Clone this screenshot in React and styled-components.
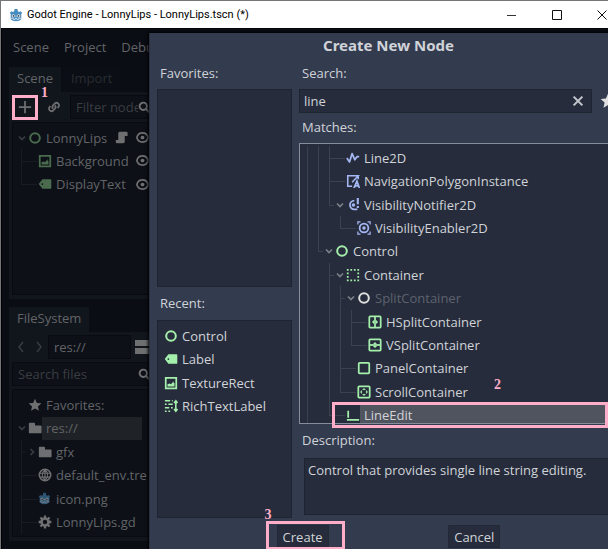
import React from "react";
import styled, { createGlobalStyle, css } from "styled-components";

const c = {
  pink: "#ffaec9",
  dialog: "#333b4f",
  field: "#262c3b",
  fieldEdge: "#1e2430",
  text: "#d0d3d8",
  green: "#a5efac",
  blue: "#a5b7f3",
  dimGreen: "#4a6b4d",
  dimText: "#626467",
  dimIcon: "#6e6f70",
  dock: "#11161d",
  well: "#0d1017",
  wellEdge: "#090b10",
};

const GlobalStyle = createGlobalStyle`
  * { box-sizing: border-box; }
  body { margin: 0; background: #777; font: 13px/20px "Open Sans", "Noto Sans", sans-serif; }
  button, input { font: inherit; color: inherit; border: 0; background: none; padding: 0; margin: 0; }
  ul { list-style: none; margin: 0; padding: 0; }
  h1, h2, p { margin: 0; }
  svg { display: block; flex: none; }
`;

const Desktop = styled.div`
  min-height: 100vh;
  padding: 1px 0 0 1px;
  background: #74767a;
  display: flex;
  flex-direction: column;
  overflow: hidden;
`;

const TitleBar = styled.header`
  height: 27px;
  flex: none;
  display: flex;
  align-items: center;
  gap: 4px;
  padding-left: 8px;
  background: #fff;
  color: #000;
`;

const WindowTitle = styled.h1`
  flex: 1;
  font: 11px/16px Roboto, sans-serif;
`;

const WindowButton = styled.button`
  width: 41px;
  height: 27px;
  display: flex;
  align-items: center;
  justify-content: center;
  &:last-child { margin-right: -14px; }
`;

const Editor = styled.main`
  position: relative;
  flex: 1;
  background: #0a0d14;
  border-left: 1px solid #000;
  border-top: 1px solid #05070b;
  overflow: hidden;
  color: ${c.dimText};
`;

const MenuBar = styled.nav`
  height: 36px;
  margin-bottom: 2px;
  display: flex;
  align-items: center;
  gap: 15px;
  padding-left: 11px;
`;

const Docks = styled.div`
  width: 147px;
  margin-left: 7px;
`;

const Tabs = styled.div`
  display: flex;
  gap: 2px;
  height: 25px;
`;

const Tab = styled.button`
  padding: 0 8px 3px;
  background: ${(p) => (p.$active ? c.dock : "#0b0f15")};
  color: ${(p) => (p.$active ? c.dimText : "#292c31")};
`;

const Dock = styled.section`
  background: ${c.dock};
  padding: 3px 3px 4px;
  height: ${(p) => p.$height}px;
  margin-bottom: 8px;
  display: flex;
  flex-direction: column;
  gap: 3px;
`;

const DockBar = styled.div`
  height: 24px;
  flex: none;
  display: flex;
  align-items: center;
`;

const DockButton = styled.button`
  position: relative;
  width: ${(p) => p.$width}px;
  height: 24px;
  flex: none;
  display: flex;
  align-items: center;
  justify-content: center;
`;

const DockField = styled.label`
  flex: 1;
  min-width: 0;
  height: 24px;
  display: flex;
  align-items: center;
  padding: 0 1px 0 5px;
  background: ${c.well};
  border: 1px solid ${c.wellEdge};
  input { width: 0; flex: 1; outline: 0; }
  input::placeholder { color: #3a3d42; opacity: 1; }
`;

const Well = styled.div`
  flex: 1;
  padding: ${(p) => p.$top}px 10px 0 3px;
  background: ${c.well};
  border: 1px solid ${c.wellEdge};
  overflow: hidden;
`;

/* Trees */
const TreeList = styled.ul`
  height: ${(p) => p.$height}px;
  display: grid;
  grid-auto-rows: 1fr;
`;

const TreeRow = styled.li`
  display: flex;
  align-items: stretch;
  min-width: 0;
`;

const Guide = styled.span`
  --line: ${(p) => (p.$dim ? "#181b21" : "#3b414f")};
  position: relative;
  flex: none;
  width: ${(p) => (p.$short ? 5 : 11)}px;
  ${(p) => "|+L".includes(p.$kind) && css`
    &::before {
      content: "";
      position: absolute;
      left: 0;
      top: 0;
      width: 1px;
      height: ${p.$kind === "L" ? "50%" : "100%"};
      background: var(--line);
    }
  `}
  ${(p) => "+L-".includes(p.$kind) && css`
    &::after {
      content: "";
      position: absolute;
      left: 0;
      right: 0;
      top: 50%;
      height: 1px;
      background: var(--line);
    }
  `}
`;

const Toggle = styled.button`
  width: 11px;
  flex: none;
  display: flex;
  align-items: center;
  justify-content: center;
`;

const IconSlot = styled.span`
  width: 15px;
  flex: none;
  display: flex;
  align-items: center;
  justify-content: center;
`;

const RowLabel = styled.span`
  flex: 1;
  min-width: 0;
  display: flex;
  align-items: center;
  padding-left: 4px;
  white-space: nowrap;
  color: ${(p) => (p.$muted ? "#5d626e" : "inherit")};
  background: ${(p) => p.$fill || "none"};
`;

/* Dialog */
const Dialog = styled.section`
  position: absolute;
  left: 147px;
  right: -20px;
  top: 4px;
  bottom: 0;
  padding: 0 8px 0 7px;
  background: ${c.dialog};
  border-left: 1px solid #2a3040;
  color: ${c.text};
  box-shadow: 0 0 3px 1px #000;
  display: flex;
  flex-direction: column;
`;

const DialogTitle = styled.h2`
  height: 26px;
  font-family: "Noto Sans", sans-serif;
  font-size: 15px;
  line-height: 24px;
  text-align: center;
`;

const Columns = styled.div`
  display: grid;
  grid-template-columns: 135px minmax(0, 1fr);
  gap: 7px;
`;

const Column = styled.div`
  display: flex;
  flex-direction: column;
`;

const Caption = styled.span`
  height: ${(p) => p.$height || 30}px;
  display: flex;
  align-items: center;
  padding: 0 0 2px 3px;
`;

const Box = styled.div`
  height: 198px;
  background: ${c.field};
  border: 1px solid ${c.fieldEdge};
  padding: 3px 5px;
`;

const RecentItem = styled.li`
  display: flex;
  align-items: center;
  gap: 4px;
  padding-left: 1px;
`;

const SearchRow = styled.div`
  display: flex;
  gap: 8px;
  align-items: center;
  margin-right: 4px;
`;

const SearchBox = styled.div`
  flex: 1;
  height: 24px;
  display: flex;
  align-items: center;
  padding: 0 6px 0 4px;
  background: ${c.field};
  border: 1px solid ${c.fieldEdge};
  input { flex: 1; width: 0; outline: 0; }
`;

const TreeArea = styled.div`
  position: relative;
`;

const MatchBox = styled.div`
  height: 281px;
  padding: 2px 14px 0 7px;
  background: ${c.field};
  border: 1px solid #868c99;
  overflow: hidden;
`;

const Description = styled.p`
  height: 57px;
  margin-left: 5px;
  padding: 1px 3px;
  background: ${c.field};
  border: 1px solid ${c.fieldEdge};
`;

const Actions = styled.div`
  display: flex;
  justify-content: space-evenly;
  margin-top: 7px;
`;

const ActionButton = styled.button`
  position: relative;
  height: 23px;
  padding: 0 6px;
  background: ${c.field};
  box-shadow: inset 0 0 0 1px #222836;
`;

/* Numbered highlights lying over the controls */
const Callout = styled.span`
  position: absolute;
  inset: ${(p) => p.$inset};
  border: 3px solid ${c.pink};
  pointer-events: none;
`;

const Step = styled.span`
  position: absolute;
  right: ${(p) => p.$right}px;
  top: ${(p) => p.$top}px;
  color: ${c.pink};
  font: bold 14px/13px "Liberation Serif", serif;
`;

const Svg = ({ size = 14, children, ...rest }) => (
  <svg width={size} height={size} viewBox="0 0 16 16" fill="none" strokeWidth="2" aria-hidden="true" {...rest}>
    {children}
  </svg>
);

const shapes = {
  ring: <circle cx="8" cy="8" r="5.5" strokeWidth="2.3" />,
  label: <path d="M5 2.5 0.8 8 5 13.5h9.2a1 1 0 0 0 1-1v-9a1 1 0 0 0-1-1zM5 7a1 1 0 1 1 0 2 1 1 0 0 1 0-2z" fill="currentColor" fillRule="evenodd" stroke="none" />,
  texture: (<><path d="M2 2h12v12H2z" /><path d="M4 12V9.5L6.5 8.5 8 9.5 11 6v2h1v4z" fill="currentColor" stroke="none" /></>),
  rich: <path d="M1 2h6M9 2h1M1 6h2M5 6h5M1 10h5M8 10h2M1 14h2M5 14h2M13.5 3v10M11.5 4.5l2-2.5 2 2.5M11.5 11.5l2 2.5 2-2.5" strokeWidth="1.8" />,
  line: <path d="M1 8l3 4.5L7 3l3 7 2.5-3.5H15" strokeLinejoin="round" />,
  nav: <path d="M7 14H2V2h12L7 9.5M14 2v4M9.5 15l3-7 2.5 7-2.5-2z" strokeWidth="1.8" />,
  notifier: (<><path d="M9.5 3a5 5 0 1 0 0 10H13" /><circle cx="8.5" cy="8" r="2" fill="currentColor" stroke="none" /><path d="M13.5 0v7M13.5 9v2.5" strokeWidth="2.4" /></>),
  enabler: (<><circle cx="8" cy="8" r="5" /><circle cx="8" cy="8" r="2" fill="currentColor" stroke="none" /><path d="M1 4V1h3M12 1h3v3M15 12v3h-3M4 15H1v-3" strokeWidth="1.4" /></>),
  container: <path d="M1 2h2M5 2h2M9 2h2M13 2h2M1 14h2M5 14h2M9 14h2M13 14h2M1 6h2M1 10h2M13 6h2M13 10h2" />,
  hsplit: (<><rect x="1.5" y="1.5" width="13" height="13" rx="1" /><path d="M8 2v12" /><path d="M4.5 8 7 5.5v5zM11.5 8 9 5.5v5z" fill="currentColor" stroke="none" /></>),
  vsplit: (<><rect x="1.5" y="1.5" width="13" height="13" rx="1" /><path d="M2 8h12" /><path d="M8 4.5 5.5 7h5zM8 11.5 5.5 9h5z" fill="currentColor" stroke="none" /></>),
  panel: <rect x="2" y="2" width="12" height="12" rx="1" />,
  scroll: (<><rect x="1.5" y="1.5" width="13" height="13" rx="1" /><path d="M6.5 5.5 8 4.5l1.5 1M6.5 10.5l1.5 1 1.5-1M5.5 6.5l-1 1.5 1 1.5M10.5 6.5l1 1.5-1 1.5" strokeWidth="1.4" /></>),
  edit: <path d="M2.5 3v8M1 13.5h14" strokeWidth="2" />,
  star: <path d="m8 .8 2.1 4.8 5.2.5-3.9 3.5 1.1 5.1L8 12l-4.5 2.7 1.1-5.1L.7 6.1l5.2-.5z" fill="currentColor" stroke="none" />,
  folder: <path d="M1 3a1 1 0 0 1 1-1h5a1 1 0 0 1 1 1v2h6.5a1 1 0 0 1 1 1v7a1 1 0 0 1-1 1H2a1 1 0 0 1-1-1z" fill="currentColor" stroke="none" />,
  globe: (<><circle cx="8" cy="8" r="6.5" strokeWidth="1.8" /><path d="M2 6h12M2 10.5h12M8 1.5v13M8 1.5c-4 4-4 9 0 13M8 1.5c4 4 4 9 0 13" strokeWidth="1.3" /></>),
  gear: (<><circle cx="8" cy="8" r="4" strokeWidth="3" /><path d="M8 .7v3M8 12.3v3M.7 8h3M12.3 8h3M2.8 2.8l2 2M11.2 11.2l2 2M13.2 2.8l-2 2M4.8 11.2l-2 2" strokeWidth="2.6" /></>),
  script: <path d="M6 1h8a1.5 1.5 0 0 1 1.5 1.5V6H12v7a2 2 0 0 1-2 2H2.5A1.5 1.5 0 0 1 1 13.5V11h3V3a2 2 0 0 1 2-2z" fill="currentColor" stroke="none" />,
  eye: (<><path d="M1 8c2-7.5 12-7.5 14 0-2 7.5-12 7.5-14 0z" /><circle cx="8" cy="8" r="2.3" fill="currentColor" stroke="none" /></>),
  search: (<><circle cx="6.5" cy="6.5" r="4.5" strokeWidth="2.4" /><path d="m10 10 5 5" strokeWidth="2.6" /></>),
  link: (<><path d="M7 10a3 3 0 0 1 0-4l2.5-2.5a3 3 0 0 1 4 4L12 9" /><path d="M9 6a3 3 0 0 1 0 4l-2.5 2.5a3 3 0 0 1-4-4L4 7" /></>),
  plus: <path d="M8 1v14M1 8h14" />,
  close: <path d="m3 3 10 10m0-10-10 10" strokeWidth="2.4" />,
  down: <path d="m2 5 6 6 6-6" strokeWidth="3.5" />,
  right: <path d="m5 2 6 6-6 6" strokeWidth="3.5" />,
};

const Icon = ({ name, color = "currentColor", size }) => (
  <Svg size={size} color={color} stroke="currentColor">{shapes[name]}</Svg>
);

const Robot = ({ size, dim }) => (
  <Svg size={size} opacity={dim ? 0.55 : 1}>
    <path d="M1 5.5 2.8 3.7l1.6 1L6 3.8 6.3 1h3.4l.3 2.8 1.6.9 1.6-1L15 5.5l-1 1.6V12c0 2-3 3-6 3s-6-1-6-3V7.1z" fill="#478cbf" />
    <circle cx="4.9" cy="9" r="1.8" fill="#e9f2f8" />
    <circle cx="11.1" cy="9" r="1.8" fill="#e9f2f8" />
    <circle cx="5.1" cy="9.1" r="1" fill="#414042" />
    <circle cx="10.9" cy="9.1" r="1" fill="#414042" />
    <path d="M8 8.4v2M2 11.7l3 .3v1.2h2V12h2v1.2h2V12l3-.3" stroke="#e9f2f8" strokeWidth=".8" />
  </Svg>
);

/* guides: "." short lead, " " blank, "|" passing line, "+" branch, "L" last branch */
function Tree({ items, dim, height, label }) {
  return (
    <TreeList $height={height} aria-label={label}>
      {items.map((it) => (
        <TreeRow key={it.name}>
          {[...(it.guides || "")].map((kind, i, all) => (
            <Guide key={i} $kind={kind} $dim={dim} $short={kind === "." || i === all.length - 1} />
          ))}
          {it.toggle ? (
            <Toggle aria-label={"Toggle " + it.name}>
              <Icon name={it.toggle} size={8} color={dim ? "#393c42" : "#7b808a"} />
            </Toggle>
          ) : (
            <Guide $kind={it.guides ? "-" : " "} $dim={dim} />
          )}
          <IconSlot>
            {it.icon === "robot" ? <Robot size={13} dim /> : <Icon name={it.icon} color={it.color} />}
          </IconSlot>
          <RowLabel $muted={it.muted} $fill={it.fill}>{it.name}</RowLabel>
          {it.extra}
        </TreeRow>
      ))}
    </TreeList>
  );
}

const RowTools = styled.span`
  flex: none;
  display: flex;
  align-items: center;
  gap: 8px;
  margin-right: -7px;
`;

const eye = <Icon name="eye" color={c.dimIcon} size={13} />;

const sceneItems = [
  { name: "LonnyLips", toggle: "down", icon: "ring", color: c.dimGreen, extra: <RowTools><Icon name="script" color={c.dimIcon} size={13} />{eye}</RowTools> },
  { name: "Background", guides: ".+", icon: "texture", color: c.dimGreen, extra: <RowTools>{eye}</RowTools> },
  { name: "DisplayText", guides: ".L", icon: "label", color: c.dimGreen, extra: <RowTools>{eye}</RowTools> },
];

const fileItems = [
  { name: "Favorites:", icon: "star", color: c.dimIcon },
  { name: "res://", toggle: "down", icon: "folder", color: c.dimIcon, fill: "#1f2226" },
  { name: "gfx", guides: ".+", toggle: "right", icon: "folder", color: c.dimIcon },
  { name: "default_env.tre", guides: ".+", icon: "globe", color: c.dimIcon },
  { name: "icon.png", guides: ".+", icon: "robot" },
  { name: "LonnyLips.gd", guides: ".+", icon: "gear", color: c.dimIcon },
];

const matches = [
  { name: "Line2D", guides: "||+", icon: "line", color: c.blue },
  { name: "NavigationPolygonInstance", guides: "||+", icon: "nav", color: c.blue },
  { name: "VisibilityNotifier2D", guides: "||L", toggle: "down", icon: "notifier", color: c.blue },
  { name: "VisibilityEnabler2D", guides: "|| L", icon: "enabler", color: c.blue },
  { name: "Control", guides: "|L", toggle: "down", icon: "ring", color: c.green },
  { name: "Container", guides: "| +", toggle: "down", icon: "container", color: c.green },
  { name: "SplitContainer", guides: "| |+", toggle: "down", icon: "ring", color: "#e0e0e0", muted: true },
  { name: "HSplitContainer", guides: "| ||+", icon: "hsplit", color: c.green },
  { name: "VSplitContainer", guides: "| ||L", icon: "vsplit", color: c.green },
  { name: "PanelContainer", guides: "| |+", icon: "panel", color: c.green },
  { name: "ScrollContainer", guides: "| |L", icon: "scroll", color: c.green },
  { name: "LineEdit", guides: "| L", icon: "edit", color: c.green, fill: "#50545f" },
];

const recent = [
  ["Control", "ring"],
  ["Label", "label"],
  ["TextureRect", "texture"],
  ["RichTextLabel", "rich"],
];

export default function App() {
  return (
    <Desktop>
      <GlobalStyle />
      <TitleBar>
        <Robot size={14} />
        <WindowTitle>Godot Engine - LonnyLips - LonnyLips.tscn (*)</WindowTitle>
        <WindowButton aria-label="Minimize">
          <svg width="10" height="10"><path d="M0 5.5h9" stroke="#333" /></svg>
        </WindowButton>
        <WindowButton aria-label="Maximize">
          <svg width="10" height="10"><path d="M.5.5h9v9h-9z" fill="none" stroke="#111" /></svg>
        </WindowButton>
        <WindowButton aria-label="Close">
          <svg width="10" height="10"><path d="m.5.5 9 9m0-9-9 9" stroke="#111" /></svg>
        </WindowButton>
      </TitleBar>

      <Editor>
        <MenuBar>
          <button>Scene</button>
          <button>Project</button>
          <button>Debug</button>
        </MenuBar>
        <Docks>
          <Tabs>
            <Tab $active>Scene</Tab>
            <Tab>Import</Tab>
          </Tabs>
          <Dock $height={207}>
            <DockBar>
              <DockButton $width={26} aria-label="Add node">
                <Icon name="plus" color={c.dimIcon} size={14} />
                <Callout $inset="0 0 -1px 0" />
                <Step $right={-10} $top={-9}>1</Step>
              </DockButton>
              <DockButton $width={32} aria-label="Instance scene">
                <Icon name="link" color={c.dimIcon} size={14} />
              </DockButton>
              <DockField>
                <input placeholder="Filter nodes" aria-label="Filter nodes" />
                <Icon name="search" color={c.dimIcon} size={13} />
              </DockField>
            </DockBar>
            <Well $top={3}>
              <Tree items={sceneItems} height={70} dim label="Scene tree" />
            </Well>
          </Dock>

          <Tabs>
            <Tab $active>FileSystem</Tab>
          </Tabs>
          <Dock $height={209}>
            <DockBar>
              <DockButton $width={18} aria-label="Back">
                <svg width="6" height="12"><path d="M5 1 1 6l4 5" fill="none" stroke="#393c42" strokeWidth="1.5" /></svg>
              </DockButton>
              <DockButton $width={18} aria-label="Forward">
                <svg width="6" height="12"><path d="m1 1 4 5-4 5" fill="none" stroke="#393c42" strokeWidth="1.5" /></svg>
              </DockButton>
              <DockField>
                <input defaultValue="res://" aria-label="Path" />
              </DockField>
              <DockButton $width={22} aria-label="Split view">
                <svg width="14" height="14"><path d="M0 0h14v6H0zM0 8h14v6H0z" fill={c.dimIcon} /></svg>
              </DockButton>
            </DockBar>
            <DockBar>
              <DockField>
                <input placeholder="Search files" aria-label="Search files" />
                <Icon name="search" color={c.dimIcon} size={13} />
              </DockField>
            </DockBar>
            <Well $top={3}>
              <Tree items={fileItems} height={141} dim label="Files" />
            </Well>
          </Dock>
        </Docks>

        <Dialog role="dialog" aria-labelledby="dialog-title">
          <DialogTitle id="dialog-title">Create New Node</DialogTitle>
          <Columns>
            <Column>
              <Caption>Favorites:</Caption>
              <Box />
              <Caption $height={33}>Recent:</Caption>
              <Box>
                <TreeList $height={94}>
                  {recent.map(([name, icon]) => (
                    <RecentItem key={name}>
                      <Icon name={icon} color={c.green} />
                      {name}
                    </RecentItem>
                  ))}
                </TreeList>
              </Box>
            </Column>
            <Column>
              <Caption as="label" htmlFor="search">Search:</Caption>
              <SearchRow>
                <SearchBox>
                  <input id="search" defaultValue="line" />
                  <button aria-label="Clear"><Icon name="close" size={14} color="#c3c6cc" /></button>
                </SearchBox>
                <button aria-label="Favorite"><Icon name="star" size={16} color="#e0e0e0" /></button>
              </SearchRow>
              <Caption>Matches:</Caption>
              <TreeArea>
                <MatchBox>
                  <Tree items={matches} height={281} label="Matches" />
                </MatchBox>
                <Callout $inset="259px 12px -4px 33px" />
                <Step $right={119} $top={235}>2</Step>
              </TreeArea>
              <Caption $height={34}>Description:</Caption>
              <Description>Control that provides single line string editing.</Description>
            </Column>
          </Columns>
          <Actions>
            <ActionButton>
              Create
              <Callout $inset="-4px -16px -2px -11px" />
              <Step $right={57} $top={-17}>3</Step>
            </ActionButton>
            <ActionButton>Cancel</ActionButton>
          </Actions>
        </Dialog>
      </Editor>
    </Desktop>
  );
}
